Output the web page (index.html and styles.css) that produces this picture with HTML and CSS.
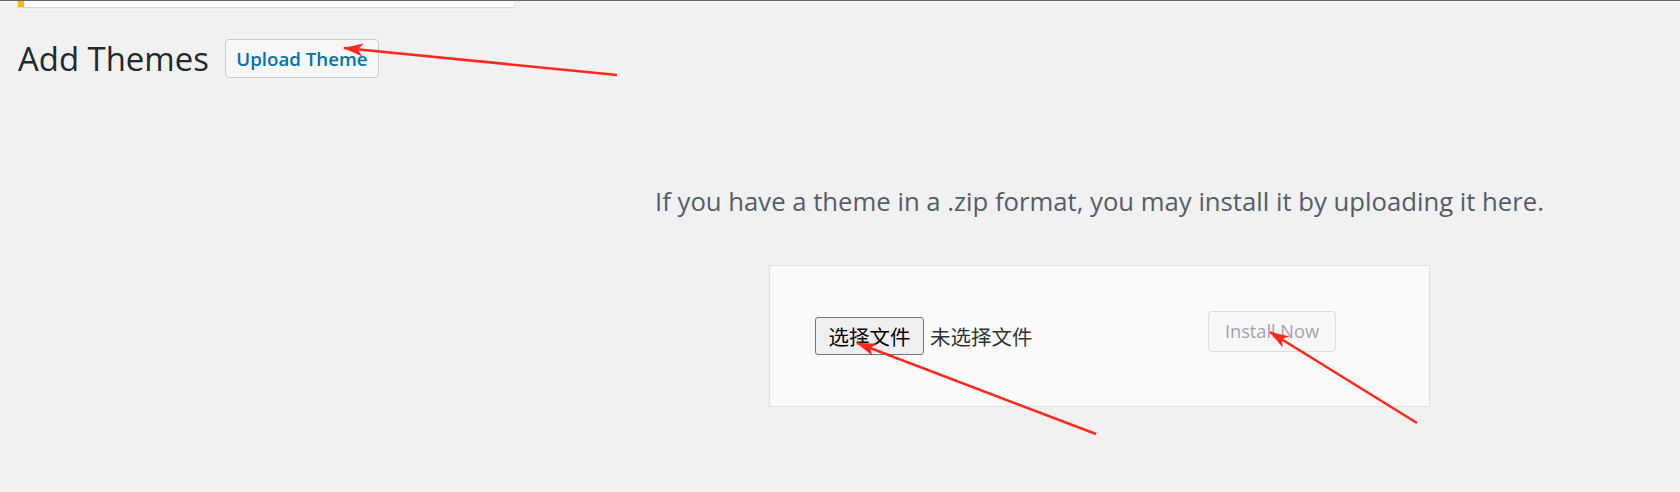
FILE: index.html
```html
<!DOCTYPE html>
<html lang="en">
<head>
<meta charset="utf-8">
<title>Add Themes</title>
<link rel="stylesheet" href="styles.css">
</head>
<body>
<div class="topline"></div>
<div class="notice"></div>
<div class="header">
  <h1 class="title">Add Themes</h1>
  <a class="page-action" href="#">Upload Theme</a>
</div>
<div class="upload">
  <p class="help">If you have a theme in a .zip format, you may install it by uploading it here.</p>
  <form class="upload-form">
    <div class="file-control">
      <button type="button" class="file-btn">选择文件</button>
      <span class="file-name">未选择文件</span>
    </div>
    <button type="button" class="install" disabled>Install Now</button>
  </form>
</div>
<svg class="annotations" width="1680" height="492" viewBox="0 0 1680 492">
  <defs>
    <marker id="ah" viewBox="0 0 20 13" refX="19" refY="6.5" markerWidth="20" markerHeight="13" orient="auto" markerUnits="userSpaceOnUse">
      <path d="M0 0 L20 6.5 L0 13 L5 6.5 Z" fill="#ff2a1f"/>
    </marker>
  </defs>
  <line x1="617" y1="75" x2="344" y2="48" stroke="#ff2a1f" stroke-width="2.6" marker-end="url(#ah)"/>
  <line x1="1096" y1="434" x2="857" y2="343" stroke="#ff2a1f" stroke-width="2.6" marker-end="url(#ah)"/>
  <line x1="1417" y1="423" x2="1270" y2="332" stroke="#ff2a1f" stroke-width="2.6" marker-end="url(#ah)"/>
</svg>
</body>
</html>
```

FILE: styles.css
```css
html, body {
  margin: 0;
  padding: 0;
}
body {
  background: #f1f1f1;
  width: 1680px;
  height: 492px;
  overflow: hidden;
  position: relative;
  font-family: "Open Sans", "Noto Sans", sans-serif;
}
.topline {
  height: 1px;
  background: #666;
}
.notice {
  margin-left: 18px;
  width: 490px;
  height: 6px;
  background: #fff;
  border-left: 6px solid #ffb900;
  box-shadow: 0 1px 1px rgba(0, 0, 0, 0.1);
}
.header {
  margin-top: 29px;
  height: 45px;
  display: flex;
  align-items: center;
  padding-left: 18px;
}
.title {
  margin: 0;
  font-size: 32.9px;
  font-weight: 400;
  line-height: 45px;
  color: #23282d;
}
.page-action {
  margin-left: 16px;
  box-sizing: border-box;
  height: 39px;
  width: 154px;
  display: flex;
  align-items: center;
  justify-content: center;
  border: 1px solid #ccc;
  border-radius: 4px;
  background: #f7f7f7;
  color: #0073aa;
  font-size: 18.7px;
  font-weight: 600;
  text-decoration: none;
}
.upload {
  margin-left: 610px;
  width: 979px;
  margin-top: 104px;
}
.help {
  margin: 0;
  text-align: center;
  font-size: 25.7px;
  line-height: 34px;
  color: #555d66;
}
.upload-form {
  margin: 46px auto 0;
  width: 661px;
  box-sizing: border-box;
  padding: 45px;
  height: 142px;
  background: #fafafa;
  border: 1px solid #e2e2e2;
  display: flex;
  align-items: flex-start;
}
.file-control {
  margin-top: 6px;
  display: flex;
  align-items: center;
  font-family: "Noto Sans CJK SC", sans-serif;
}
.file-btn {
  box-sizing: border-box;
  height: 38px;
  width: 109px;
  padding: 0;
  border: 1px solid #767676;
  border-radius: 3px;
  background: #efefef;
  color: #000;
  font-family: "Noto Sans CJK SC", sans-serif;
  font-size: 20.5px;
  line-height: 36px;
}
.file-name {
  margin-left: 6px;
  font-size: 20.5px;
  color: #333;
}
.install {
  margin-left: auto;
  margin-right: 48px;
  box-sizing: border-box;
  width: 128px;
  height: 41px;
  padding: 0;
  border: 1px solid #ddd;
  border-radius: 4px;
  background: #f7f7f7;
  color: #a0a5aa;
  font-family: "Open Sans", sans-serif;
  font-size: 18.2px;
  line-height: 39px;
}
.annotations {
  position: absolute;
  top: 0;
  left: 0;
  pointer-events: none;
}
```
